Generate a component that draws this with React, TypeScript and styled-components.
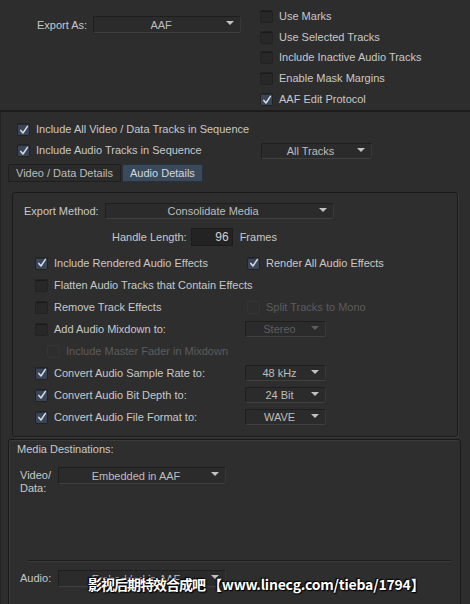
import styled, { createGlobalStyle } from "styled-components";

const GlobalStyle = createGlobalStyle`
  html, body {
    margin: 0;
    padding: 0;
    background: #2d2d2d;
  }
  body {
    font-family: "Liberation Sans", Arial, sans-serif;
    font-size: 11px;
    color: #c8c8c8;
  }
`;

const Page = styled.div`
  position: relative;
  width: 470px;
  height: 604px;
  overflow: hidden;
  background: #2d2d2d;
`;

const TopSection = styled.div`
  display: flex;
  height: 112px;
  border-bottom: 2px solid #1c1c1c;
  box-sizing: border-box;
`;

const ExportAsRow = styled.div`
  display: flex;
  align-items: center;
  align-self: flex-start;
  flex: none;
  gap: 6px;
  width: 260px;
  padding: 16px 0 0 37px;
  box-sizing: border-box;
`;

const CheckList = styled.div`
  display: flex;
  flex-direction: column;
  padding-top: 6px;
`;

const CheckRow = styled.label<{ $indent?: number }>`
  display: flex;
  align-items: center;
  gap: 6px;
  height: 21px;
  padding-left: ${({ $indent }) => $indent ?? 0}px;
  white-space: nowrap;
`;

const OptionLabel = styled.span<{ $disabled?: boolean }>`
  color: ${({ $disabled }) => ($disabled ? "#5c5c5c" : "#c8c8c8")};
  line-height: 13px;
`;

const Box = styled.span<{ $checked?: boolean; $disabled?: boolean }>`
  display: inline-flex;
  align-items: center;
  justify-content: center;
  flex: none;
  width: 13px;
  height: 13px;
  box-sizing: border-box;
  border-radius: 2px;
  border: 1px solid
    ${({ $disabled }) => ($disabled ? "#353535" : "#222")};
  background: ${({ $checked, $disabled }) =>
    $disabled ? "#2e2e2e" : $checked ? "#3a4658" : "#282828"};
  box-shadow: ${({ $disabled }) =>
    $disabled ? "none" : "inset 0 1px 0 rgba(0,0,0,0.35)"};
`;

function Checkbox({
  checked,
  disabled,
}: {
  checked?: boolean;
  disabled?: boolean;
}) {
  return (
    <Box $checked={checked} $disabled={disabled}>
      {checked && (
        <svg width="10" height="10" viewBox="0 0 10 10">
          <path
            d="M1.8 5.4 L4 8 L8.4 1.4"
            fill="none"
            stroke="#d8dde6"
            strokeWidth="1.5"
            strokeLinecap="round"
            strokeLinejoin="round"
          />
        </svg>
      )}
    </Box>
  );
}

function CheckItem({
  label,
  checked,
  disabled,
  indent,
}: {
  label: string;
  checked?: boolean;
  disabled?: boolean;
  indent?: number;
}) {
  return (
    <CheckRow $indent={indent}>
      <Checkbox checked={checked} disabled={disabled} />
      <OptionLabel $disabled={disabled}>{label}</OptionLabel>
    </CheckRow>
  );
}

const DropdownBox = styled.div<{ $w: number; $h?: number; $disabled?: boolean }>`
  position: relative;
  display: flex;
  align-items: center;
  justify-content: center;
  flex: none;
  width: ${({ $w }) => $w}px;
  height: ${({ $h }) => $h ?? 16}px;
  box-sizing: border-box;
  padding-right: 12px;
  border: 1px solid #1e1e1e;
  border-bottom-color: #404040;
  border-right-color: #383838;
  border-radius: 2px;
  background: #2b2b2b;
  color: ${({ $disabled }) => ($disabled ? "#5e5e5e" : "#bdbdbd")};
  &::after {
    content: "";
    position: absolute;
    right: 6px;
    top: 4px;
    border-left: 4px solid transparent;
    border-right: 4px solid transparent;
    border-top: 4px solid ${({ $disabled }) => ($disabled ? "#5e5e5e" : "#c2c2c2")};
  }
`;

const FieldLabel = styled.span`
  color: #c8c8c8;
  white-space: nowrap;
`;

const LowerSection = styled.div`
  display: flex;
  flex-direction: column;
  border-left: 1px solid #232323;
`;

const SequenceRows = styled.div`
  display: flex;
  flex-direction: column;
  padding: 7px 0 0 16px;
`;

const SequenceRow = styled.div`
  display: grid;
  grid-template-columns: 244px auto;
  align-items: center;
  height: 21px;
`;

const Tabs = styled.div`
  display: flex;
  margin: 3px 0 0 7px;
`;

const Tab = styled.div<{ $active?: boolean }>`
  display: flex;
  align-items: center;
  height: 18px;
  box-sizing: border-box;
  padding: 0 7px;
  border: 1px solid ${({ $active }) => ($active ? "#27313d" : "#1f1f1f")};
  border-radius: 2px 2px 0 0;
  background: ${({ $active }) => ($active ? "#3b4a5b" : "#2b2b2b")};
  color: ${({ $active }) => ($active ? "#d2d8e0" : "#bdbdbd")};
  margin-right: 1px;
`;

const DetailsPanel = styled.div`
  margin: 10px 0 0 11px;
  width: 446px;
  height: 245px;
  box-sizing: border-box;
  padding: 10px 0 0 11px;
  border: 1px solid #1a1a1a;
  border-radius: 3px;
  box-shadow: 1px 1px 0 #3a3a3a;
  background: #2e2e2e;
`;

const MethodRow = styled.div`
  display: flex;
  align-items: center;
  gap: 6px;
`;

const HandleRow = styled.div`
  display: flex;
  align-items: center;
  margin: 9px 0 0 88px;
`;

const NumberField = styled.div`
  width: 42px;
  height: 18px;
  box-sizing: border-box;
  margin: 0 7px 0 4px;
  padding-right: 3px;
  display: flex;
  align-items: center;
  justify-content: flex-end;
  background: #232323;
  border: 1px solid #1c1c1c;
  color: #d0d0d0;
  font-size: 12px;
`;

const OptionGrid = styled.div`
  display: grid;
  grid-template-columns: 210px 1fr;
  grid-auto-rows: 22px;
  align-items: center;
  margin: 6px 0 0 11px;
`;

const RightCell = styled.div<{ $shift?: number }>`
  padding-left: ${({ $shift }) => $shift ?? 0}px;
`;

const MediaPanel = styled.div`
  margin: 2px 0 0 7px;
  width: 453px;
  height: 200px;
  box-sizing: border-box;
  padding: 3px 0 0 8px;
  border: 1px solid #1a1a1a;
  border-radius: 3px;
  box-shadow: inset 1px 1px 0 #3a3a3a;
  background: #2e2e2e;
`;

const MediaTitle = styled.div`
  line-height: 13px;
`;

const DestRow = styled.div<{ $top: number }>`
  display: flex;
  align-items: flex-start;
  margin: ${({ $top }) => $top}px 0 0 3px;
`;

const DestLabel = styled.div`
  width: 38px;
  line-height: 13px;
  padding-top: 2px;
`;

const Separator = styled.div`
  margin: 65px 0 0 11px;
  width: 423px;
  height: 1px;
  background: #1c1c1c;
  border-bottom: 1px solid #3a3a3a;
`;

const Watermark = styled.div`
  position: absolute;
  left: 88px;
  top: 575px;
  font-family: "Noto Sans CJK SC", "Liberation Sans", sans-serif;
  font-weight: 700;
  font-size: 14px;
  line-height: 18px;
  color: #ffffff;
  letter-spacing: -0.2px;
  white-space: nowrap;
  text-shadow: 0 0 2px #000, 1px 1px 1px #000, -1px -1px 1px #000;
`;

const WatermarkCjk = styled.span`
  letter-spacing: -1px;
  margin-right: 3px;
`;

export default function App() {
  return (
    <Page>
      <GlobalStyle />
      <TopSection>
        <ExportAsRow>
          <FieldLabel>Export As:</FieldLabel>
          <DropdownBox $w={148} $h={17}>
            AAF
          </DropdownBox>
        </ExportAsRow>
        <CheckList>
          <CheckItem label="Use Marks" />
          <CheckItem label="Use Selected Tracks" />
          <CheckItem label="Include Inactive Audio Tracks" />
          <CheckItem label="Enable Mask Margins" />
          <CheckItem label="AAF Edit Protocol" checked />
        </CheckList>
      </TopSection>

      <LowerSection>
        <SequenceRows>
          <CheckItem label="Include All Video / Data Tracks in Sequence" checked />
          <SequenceRow>
            <CheckItem label="Include Audio Tracks in Sequence" checked />
            <DropdownBox $w={111}>All Tracks</DropdownBox>
          </SequenceRow>
        </SequenceRows>

        <Tabs>
          <Tab>Video / Data Details</Tab>
          <Tab $active>Audio Details</Tab>
        </Tabs>

        <DetailsPanel>
          <MethodRow>
            <FieldLabel>Export Method:</FieldLabel>
            <DropdownBox $w={229}>Consolidate Media</DropdownBox>
          </MethodRow>
          <HandleRow>
            <FieldLabel>Handle Length:</FieldLabel>
            <NumberField>96</NumberField>
            <FieldLabel>Frames</FieldLabel>
          </HandleRow>
          <OptionGrid>
            <CheckItem label="Include Rendered Audio Effects" checked />
            <RightCell $shift={2}>
              <CheckItem label="Render All Audio Effects" checked />
            </RightCell>
            <CheckItem label="Flatten Audio Tracks that Contain Effects" />
            <RightCell />
            <CheckItem label="Remove Track Effects" />
            <RightCell $shift={2}>
              <CheckItem label="Split Tracks to Mono" disabled />
            </RightCell>
            <CheckItem label="Add Audio Mixdown to:" />
            <RightCell>
              <DropdownBox $w={81} $disabled>
                Stereo
              </DropdownBox>
            </RightCell>
            <CheckItem label="Include Master Fader in Mixdown" disabled indent={12} />
            <RightCell />
            <CheckItem label="Convert Audio Sample Rate to:" checked />
            <RightCell>
              <DropdownBox $w={81}>48 kHz</DropdownBox>
            </RightCell>
            <CheckItem label="Convert Audio Bit Depth to:" checked />
            <RightCell>
              <DropdownBox $w={81}>24 Bit</DropdownBox>
            </RightCell>
            <CheckItem label="Convert Audio File Format to:" checked />
            <RightCell>
              <DropdownBox $w={81}>WAVE</DropdownBox>
            </RightCell>
          </OptionGrid>
        </DetailsPanel>

        <MediaPanel>
          <MediaTitle>Media Destinations:</MediaTitle>
          <DestRow $top={11}>
            <DestLabel>
              Video/
              <br />
              Data:
            </DestLabel>
            <DropdownBox $w={168} $h={17}>
              Embedded in AAF
            </DropdownBox>
          </DestRow>
          <Separator />
          <DestRow $top={8}>
            <DestLabel>Audio:</DestLabel>
            <DropdownBox $w={168} $h={17}>
              Embedded in AAF
            </DropdownBox>
          </DestRow>
        </MediaPanel>
      </LowerSection>

      <Watermark>
        <WatermarkCjk>影视后期特效合成吧</WatermarkCjk>【www.linecg.com/tieba/1794】
      </Watermark>
    </Page>
  );
}
